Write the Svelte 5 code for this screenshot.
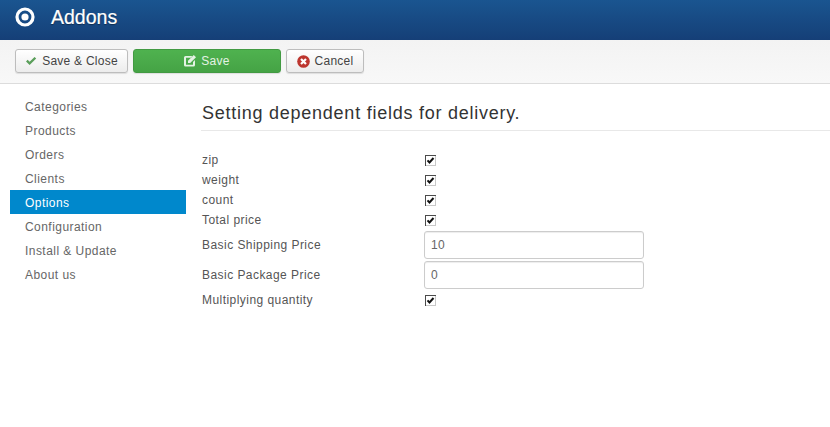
<script>
  const nav = ['Categories', 'Products', 'Orders', 'Clients', 'Options', 'Configuration', 'Install & Update', 'About us'];
  const fields = [
    { label: 'zip', type: 'check' },
    { label: 'weight', type: 'check' },
    { label: 'count', type: 'check' },
    { label: 'Total price', type: 'check' },
    { label: 'Basic Shipping Price', type: 'text', value: '10' },
    { label: 'Basic Package Price', type: 'text', value: '0' },
    { label: 'Multiplying quantity', type: 'check' }
  ];
</script>

<div class="page">
  <header class="top">
    <svg class="logo" width="22" height="22" viewBox="0 0 22 22" aria-hidden="true">
      <circle cx="11" cy="11" r="8" fill="none" stroke="#fff" stroke-width="3.2" />
      <circle cx="11" cy="11" r="3.6" fill="#fff" />
    </svg>
    <h1>Addons</h1>
  </header>

  <div class="toolbar">
    <button class="btn save-close">
      <svg width="12" height="10" viewBox="0 0 13 11" aria-hidden="true"><path d="M1 6l1.800-1.800L5 6.300 10.400 1 12.200 2.800 5 10z" fill="#5a9e5a" /></svg>
      Save &amp; Close
    </button>
    <button class="btn save">
      <svg width="12" height="12" viewBox="0 0 12 12" aria-hidden="true">
        <path d="M1.500 1H8.500L6.700 2.800H2V9.800H9V7L11 5V10A1.500 1.500 0 0 1 9.500 11.500H1.500A1.500 1.500 0 0 1 0 10V2.500A1.500 1.500 0 0 1 1.500 1z" fill="#e4f2e4" />
        <path d="M4 5.800L9.800 0 12 2.200 6.200 8H4z" fill="#e4f2e4" />
      </svg>
      Save
    </button>
    <button class="btn cancel">
      <svg width="13" height="13" viewBox="0 0 13 13" aria-hidden="true">
        <circle cx="6.500" cy="6.500" r="6.300" fill="#bd362f" />
        <path d="M4 4l5 5M9 4l-5 5" stroke="#fff" stroke-width="2.200" />
      </svg>
      Cancel
    </button>
  </div>

  <div class="main">
    <nav class="side">
      {#each nav as item}
        <a href="#top" class:active={item === 'Options'}>{item}</a>
      {/each}
    </nav>

    <section class="content">
      <h2>Setting dependent fields for delivery.</h2>
      <div class="form">
        {#each fields as f}
          <div class="row" class:textrow={f.type === 'text'}>
            <span class="label">{f.label}</span>
            {#if f.type === 'check'}
              <svg class="check" width="11" height="11" viewBox="0 0 11 11" aria-hidden="true">
                <rect x="0" y="0" width="11" height="11" fill="#c8c8c8" />
                <path d="M0 11V0h11v1H1v10z" fill="#4a4a4a" />
                <rect x="1" y="1" width="9" height="9" fill="#fff" />
                <path d="M2.500 5.300l2 2.200 4-4.500" fill="none" stroke="#111" stroke-width="2" />
              </svg>
            {:else}
              <input type="text" value={f.value} />
            {/if}
          </div>
        {/each}
      </div>
    </section>
  </div>
</div>

<style>
  :global(body) {
    margin: 0;
    background: #fff;
    font-family: "Liberation Sans", Arial, sans-serif;
    font-size: 12px;
    color: #333;
  }
  .page {
    width: 830px;
    height: 427px;
    overflow: hidden;
  }
  .top {
    height: 40px;
    box-sizing: border-box;
    display: flex;
    align-items: center;
    padding: 0 0 6px 14px;
    background: linear-gradient(#1a5590, #153f77);
  }
  .logo {
    flex: none;
  }
  h1 {
    margin: 0 0 0 15px;
    font-size: 19.500px;
    font-weight: 400;
    color: #fff;
    text-shadow: 0 1px 1px rgba(0, 0, 0, .4);
    -webkit-text-stroke: .2px #fff;
  }
  .toolbar {
    height: 44px;
    box-sizing: border-box;
    display: flex;
    align-items: flex-start;
    gap: 5px;
    padding: 9px 0 0 15px;
    background: linear-gradient(#f3f3f3, #f8f8f8);
    border-bottom: 1px solid #dcdcdc;
  }
  .btn {
    height: 24px;
    box-sizing: border-box;
    display: flex;
    align-items: center;
    justify-content: center;
    gap: 5px;
    padding: 0;
    border: 1px solid #bdbdbd;
    border-radius: 3px;
    background: linear-gradient(#fff, #ececec);
    box-shadow: 0 1px 1px rgba(0, 0, 0, .1);
    font: 12px "Liberation Sans", Arial, sans-serif;
    letter-spacing: .25px;
    color: #444;
  }
  .save-close { width: 113px; }
  .save {
    width: 148px;
    color: #e4f2e4;
    background: linear-gradient(#4fb24f, #45a345);
    border-color: #429a42;
  }
  .cancel { width: 78px; }
  .main {
    display: flex;
    padding-top: 10px;
  }
  .side {
    width: 176px;
    margin-left: 10px;
    flex: none;
    display: flex;
    flex-direction: column;
  }
  .side a {
    height: 24px;
    line-height: 26px;
    padding-left: 15px;
    color: #666;
    text-decoration: none;
    letter-spacing: .45px;
  }
  .side a.active {
    background: #0088cc;
    color: #fff;
  }
  .content {
    flex: 1;
    margin-left: 15px;
    min-width: 0;
  }
  h2 {
    margin: 0;
    height: 37px;
    box-sizing: border-box;
    padding: 8px 0 0 1px;
    font-size: 18px;
    line-height: 22px;
    font-weight: 400;
    letter-spacing: .75px;
    color: #333;
    border-bottom: 1px solid #e8e8e8;
  }
  .form {
    margin-top: 19px;
    display: flex;
    flex-direction: column;
  }
  .row {
    height: 20px;
    display: flex;
    align-items: center;
  }
  .textrow {
    height: 30px;
  }
  .label {
    width: 222px;
    padding-left: 1px;
    flex: none;
    letter-spacing: .45px;
    color: #555;
  }
  .check {
    flex: none;
    margin: 1px 0 0 1px;
  }
  input {
    width: 220px;
    height: 28px;
    box-sizing: border-box;
    padding: 0 6px;
    border: 1px solid #ccc;
    border-radius: 3px;
    font: 12px "Liberation Sans", Arial, sans-serif;
    letter-spacing: .4px;
    color: #666;
    box-shadow: inset 0 1px 1px rgba(0, 0, 0, .075);
  }
</style>
